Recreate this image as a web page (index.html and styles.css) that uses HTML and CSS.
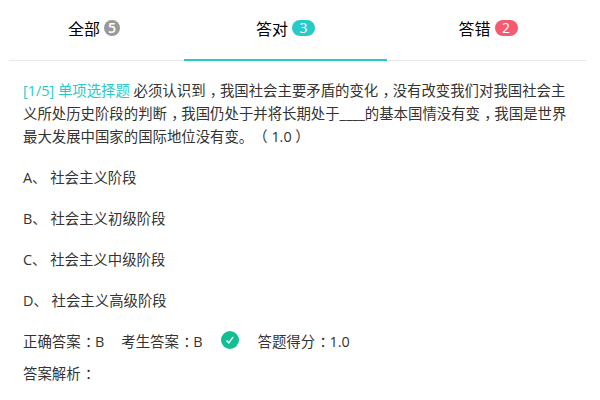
FILE: index.html
```html
<!DOCTYPE html>
<html lang="zh">
<head>
<meta charset="utf-8">
<title>答题结果</title>
<link rel="stylesheet" href="styles.css">
</head>
<body>
<nav class="tabs">
  <div class="tab tab-all">全部<span class="badge badge-gray">5</span></div>
  <div class="tab tab-right active">答对<span class="badge badge-teal">3</span></div>
  <div class="tab tab-wrong">答错<span class="badge badge-red">2</span></div>
</nav>
<main class="content">
  <p class="question"><span class="q-meta">[1/5] 单项选择题</span> 必须认识到<span class="mk">，</span>我国社会主要矛盾的变化<span class="mk">，</span>没有改变我们对我国社会主义所处历史阶段的判断<span class="mk">，</span>我国仍处于并将长期处于____的基本国情没有变<span class="mk">，</span>我国是世界最大发展中国家的国际地位没有变。（ 1.0 ）</p>
  <ul class="options">
    <li>A、 社会主义阶段</li>
    <li>B、 社会主义初级阶段</li>
    <li>C、 社会主义中级阶段</li>
    <li>D、 社会主义高级阶段</li>
  </ul>
  <div class="result">
    <span>正确答案<span class="mk">：</span>B</span>
    <span class="student">考生答案<span class="mk">：</span>B</span>
    <svg class="check" width="18" height="18" viewBox="0 0 18 18" aria-hidden="true"><circle cx="9" cy="9" r="9" fill="#12bf94"/><path d="M5.6 9.6l2.3 2.3 4.2-6" fill="none" stroke="#fff" stroke-width="1.5"/></svg>
    <span class="score">答题得分<span class="mk">：</span>1.0</span>
  </div>
  <div class="analysis">答案解析<span class="mk">：</span></div>
</main>
</body>
</html>
```

FILE: styles.css
```css
html, body { margin: 0; padding: 0; background: #fff; }
body {
  width: 600px;
  height: 400px;
  overflow: hidden;
  font-family: "Open Sans", "Noto Sans CJK SC", sans-serif;
  color: #333;
  font-size: 14.4px;
  text-spacing-trim: space-all;
}
.tabs {
  display: grid;
  grid-template-columns: 175px 203px 199px;
  margin-left: 9px;
  width: 577px;
  height: 61px;
  border-bottom: 1px solid #e8e8e8;
  box-sizing: border-box;
}
.tab {
  display: flex;
  justify-content: center;
  align-items: center;
  height: 61px;
  box-sizing: border-box;
  padding-bottom: 5px;
  font-size: 16px;
  color: #000;
}
.tab-all { padding-right: 5px; }
.tab.active { border-bottom: 2px solid #26cbc9; padding-bottom: 3px; }
.tab-wrong { padding-left: 3px; }
.badge {
  display: inline-block;
  margin-left: 4px;
  height: 16px;
  line-height: 16px;
  border-radius: 8px;
  min-width: 16px;
  text-align: center;
  color: #fff;
  font-size: 14px;
}
.badge-gray { background: #999; font-weight: 600; }
.badge-teal { background: #26cbc9; width: 23px; }
.badge-red { background: #f55a6e; width: 23px; }
.content { padding: 18px 10px 0 23px; }
.question { margin: 0; line-height: 23.04px; width: 546px; color: #333; }
.q-meta { color: #26cbc9; }
.mk { font-feature-settings: "halt"; padding-left: 0.3em; padding-right: 0.2em; }
.options { list-style: none; margin: 9px 0 0; padding: 0; }
.options li { height: 41px; line-height: 41px; }
.result { display: flex; align-items: center; height: 24px; margin-top: 7px; }
.student { margin-left: 17px; }
.check { margin-left: 18px; }
.score { margin-left: 19px; }
.analysis { margin-top: 10px; line-height: 24px; }
```
